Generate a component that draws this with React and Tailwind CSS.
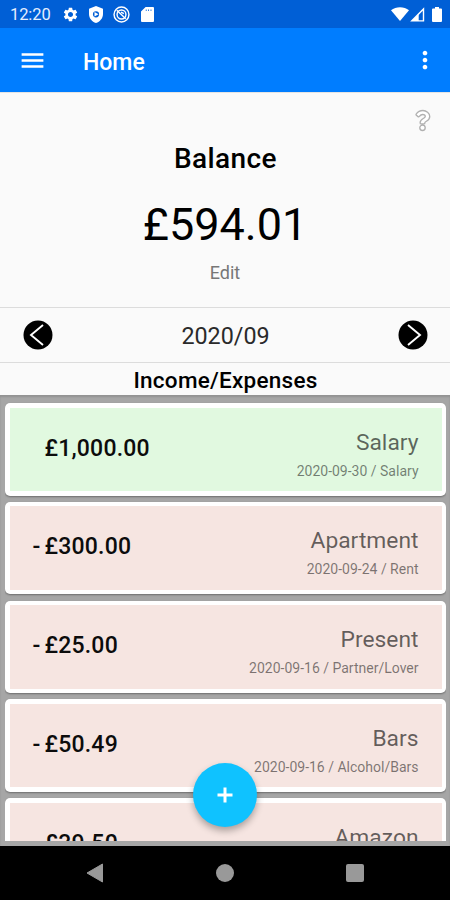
import { FaQuestion } from "react-icons/fa";
import { MdSettings, MdMenu, MdMoreVert } from "react-icons/md";

const ENTRIES = [
  { id: 1, sign: "", amount: "£1,000.00", title: "Salary", info: "2020-09-30 / Salary", income: true },
  { id: 2, sign: "-", amount: "£300.00", title: "Apartment", info: "2020-09-24 / Rent" },
  { id: 3, sign: "-", amount: "£25.00", title: "Present", info: "2020-09-16 / Partner/Lover" },
  { id: 4, sign: "-", amount: "£50.49", title: "Bars", info: "2020-09-16 / Alcohol/Bars" },
  { id: 5, sign: "-", amount: "£39.50", title: "Amazon", info: "" },
];

function StatusBar() {
  return (
    <div className="flex h-7 items-center bg-[#005fd6] pl-[10px] pr-[8px] text-white">
      <span className="w-[52px] pt-[2px] text-[16.500px] leading-none tracking-[-0.1px] text-[#e3eeff]">12:20</span>
      <MdSettings className="mt-px size-[17px]" />
      <svg viewBox="0 0 14 17" className="ml-[10px] mt-px h-[17px] w-[14px]" fill="currentColor">
        <path
          fillRule="evenodd"
          d="M7 0 14 2.800V8c0 4.200-3 7.800-7 9-4-1.200-7-4.800-7-9V2.800ZM7 5.200A3.100 3.100 0 1 0 7 11.400 3.100 3.100 0 1 0 7 5.200Z"
        />
        <path d="M5.500 6 9.500 8.300 5.500 10.600Z" />
      </svg>
      <svg viewBox="0 0 18 18" className="ml-[10px] size-[17px]" fill="none" stroke="currentColor">
        <circle cx="9" cy="9" r="7.900" strokeWidth="1.500" />
        <circle cx="9" cy="9" r="4.700" strokeWidth="1.500" />
        <path d="M4 4.500 13.500 13.500M8.500 6.500 11.500 8" strokeWidth="1.500" />
      </svg>
      <svg viewBox="0 0 13 15" className="ml-[11px] mt-px h-[15px] w-[13px]" fill="currentColor">
        <path
          fillRule="evenodd"
          d="M4.600 0H12q1 0 1 1v13q0 1-1 1H1q-1 0-1-1V4.600ZM4.800 2.400V4h.8V2.400ZM7.200 2.400V4h.8V2.400ZM9.600 2.400V4h.8V2.400Z"
        />
      </svg>
      <svg viewBox="0 0 18 14" className="ml-auto h-[14px] w-[18px]" fill="currentColor">
        <path d="M0 3.200C5-.900 13-.900 18 3.200L9 14Z" />
      </svg>
      <svg viewBox="0 0 15 15" className="ml-px h-[15px] w-[15px]" fill="none" stroke="currentColor">
        <path d="M13.500 2v11.900H1.800Z" strokeWidth="1.400" />
        <path d="M8.700 7v7H2Z" fill="currentColor" stroke="none" />
      </svg>
      <svg viewBox="0 0 10 15" className="ml-[7px] h-[15px] w-[10px]" fill="currentColor">
        <path d="M3 0h4v1.500h2q1 0 1 1V14q0 1-1 1H1q-1 0-1-1V2.500q0-1 1-1h2Z" />
      </svg>
    </div>
  );
}

function ArrowButton({ flip }) {
  return (
    <button type="button" className={flip ? "rotate-180" : ""}>
      <svg viewBox="0 0 30 30" className="block size-[30px]">
        <circle cx="15" cy="15" r="14.500" fill="#000" />
        <path d="M20 5 8 15 20 25" fill="none" stroke="#fff" strokeWidth="1.900" />
      </svg>
    </button>
  );
}

function EntryCard({ entry }) {
  return (
    <div className="h-[92.500px] shrink-0 rounded-[5px] bg-white p-[4.500px] shadow-[0_1px_2px_rgba(0,0,0,0.35)]">
      <div
        className={`flex h-full justify-between pl-[23px] pr-[23px] ${
          entry.income ? "bg-[#e1f9e0]" : "bg-[#f6e5e1]"
        }`}
      >
        <div className="flex pt-[27px] text-[23px] font-medium leading-[27px] tracking-[0.2px] text-[#0c0c0c]">
          <span className="w-[12px]">{entry.sign}</span>
          <span>{entry.amount}</span>
        </div>
        <div className="pt-[21px] text-right">
          <div className="text-[22.800px] leading-[27px] text-black/60">{entry.title}</div>
          <div className="mt-[7px] text-[14px] leading-[16px] text-black/50">{entry.info}</div>
        </div>
      </div>
    </div>
  );
}

export default function App() {
  return (
    <div className="relative flex h-[900px] w-[450px] flex-col overflow-hidden bg-[#fafafa] font-['Roboto',sans-serif]">
      <StatusBar />

      <header className="flex h-16 items-center bg-[#007dff] pl-[18px] pr-[11px] text-white">
        <MdMenu className="size-[29px]" />
        <h1 className="ml-[36px] mt-[4px] text-[23px] font-medium leading-none">Home</h1>
        <MdMoreVert className="ml-auto size-[28px]" />
      </header>

      <section className="relative flex h-[215px] flex-col items-center border-t border-[#e4e4e4]">
        <FaQuestion className="absolute right-[20px] top-[17px] h-[21px] w-[15px] overflow-visible fill-white stroke-[#b0b0b0] stroke-[34px]" />
        <h2 className="ml-px mt-[49px] text-[28px] font-medium leading-[33px] tracking-[0.4px] text-black">Balance</h2>
        <div className="mt-[23px] text-[45px] leading-[53px] text-black">£594.01</div>
        <button type="button" className="mt-[11px] text-[18px] leading-[22px] text-[#777]">
          Edit
        </button>
      </section>

      <section className="flex h-[56px] items-center justify-between border-y border-[#dcdcdc] pl-[23px] pr-[22px]">
        <ArrowButton />
        <span className="mt-[3px] text-[23.300px] text-[#2a2a2a]">2020/09</span>
        <ArrowButton flip />
      </section>

      <h3 className="h-[32px] pl-px text-center text-[22.500px] font-medium leading-[35px] tracking-[0.25px] text-black">
        Income/Expenses
      </h3>

      <main className="h-[451px] bg-[#a6a6a6] pb-[5px] pl-[5px] pr-[4px] shadow-[inset_0_2px_2px_rgba(0,0,0,0.12)]">
        <div className="flex h-full flex-col gap-[6.200px] overflow-hidden pt-[8.300px]">
          {ENTRIES.map((entry) => (
            <EntryCard key={entry.id} entry={entry} />
          ))}
        </div>
      </main>

      <button
        type="button"
        className="absolute left-[193px] top-[763px] flex size-16 items-center justify-center rounded-full bg-[#0fc2ff] shadow-[0_4px_7px_rgba(0,0,0,0.3)]"
      >
        <svg viewBox="0 0 16 16" className="size-4" stroke="#fff" strokeWidth="3">
          <path d="M8 .500v15M.500 8h15" />
        </svg>
      </button>

      <nav className="flex flex-1 items-center justify-between bg-black pl-[86px] pr-[86px]">
        <svg viewBox="0 0 18 20" className="h-5 w-[18px]">
          <path d="M16.500 1v18L1 10Z" fill="#999" stroke="#999" strokeLinejoin="round" />
        </svg>
        <div className="size-[18px] rounded-full bg-[#999]" />
        <div className="size-[18px] rounded-[2px] bg-[#999]" />
      </nav>
    </div>
  );
}
